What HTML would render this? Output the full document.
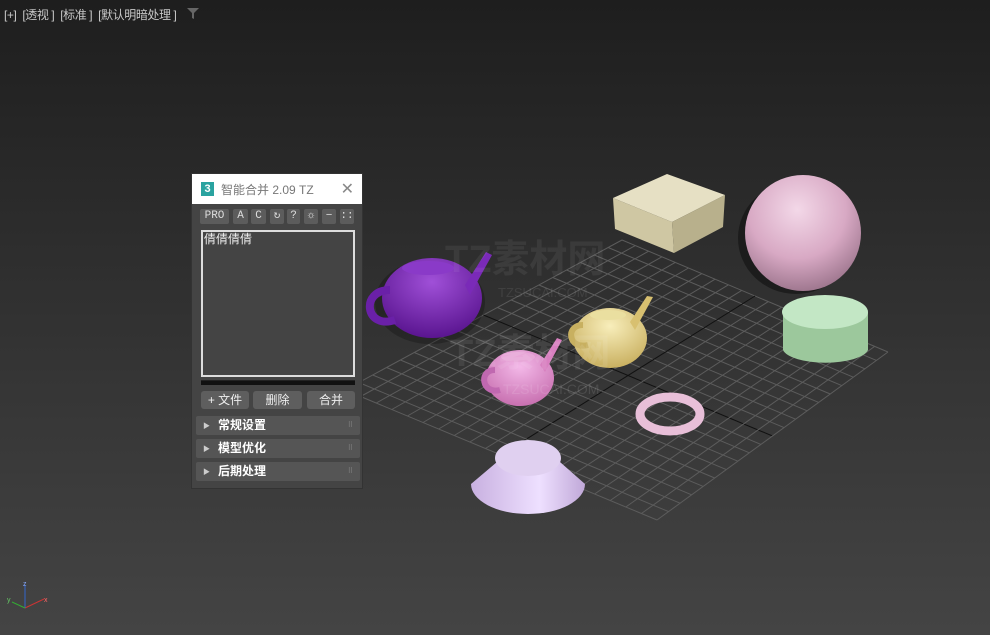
<!DOCTYPE html>
<html><head><meta charset="utf-8"><style>
body{margin:0;width:990px;height:635px;overflow:hidden;background:linear-gradient(#1e1e1e,#2c2c2c 35%,#444 100%);font-family:"Liberation Sans","Noto Sans CJK SC",sans-serif;position:relative}
.top{position:absolute;left:4px;top:6px;font-size:12px;color:#c8c8c8;white-space:pre;letter-spacing:-0.4px}
.panel{position:absolute;left:191px;top:173px;width:172px;height:316px;background:#444;border:1px solid #333;box-sizing:border-box}
.tt{height:30px;background:#fff;color:#777;font-size:12px;display:flex;align-items:center;position:relative}
.ic{width:13px;height:14px;background:#2aa3a0;color:#fff;font-size:11px;font-weight:bold;text-align:center;line-height:14px;margin:0 7px 0 9px}
.x{position:absolute;right:8px;top:5px;font-size:16px;color:#888}
.tb{position:absolute;top:35px;height:15px;background:#5c5c5c;border-radius:2px;color:#ddd;font-size:11px;text-align:center;line-height:15px;font-family:"Liberation Mono",monospace}
.list{position:absolute;left:9px;top:56px;width:154px;height:147px;border:2px solid #ddd;box-sizing:border-box;background:#444;color:#eee;font-size:12px;padding:0 1px;line-height:14px}
.bar{position:absolute;left:9px;top:206px;width:154px;height:4px;background:#111;border-top:1px solid #222}
.btn{position:absolute;top:217px;height:18px;background:#5e5e5e;border-radius:3px;color:#eee;font-size:12px;text-align:center;line-height:18px}
.sec{position:absolute;left:4px;width:164px;height:19px;background:#555;border-radius:2px;color:#fff;font-weight:bold;font-size:12px;line-height:19px}
.sec i{font-style:normal;font-size:7px;color:#ccc;margin:0 8px 0 7px;vertical-align:1px}
.sec b{position:absolute;right:7px;color:#888;font-size:7px;font-weight:normal}
</style></head><body>
<div class="top">[+]  [透视 ]  [标准 ]  [默认明暗处理 ]</div>
<svg style="position:absolute;left:187px;top:8px" width="12" height="11"><path d="M0 0H12L7 5V11L5 10V5Z" fill="#666"/></svg>
<svg width="990" height="635" style="position:absolute;left:0;top:0">
<defs>
<radialGradient id="sp" cx=".45" cy=".3" r=".7"><stop offset="0" stop-color="#f3d8e8"/><stop offset=".6" stop-color="#d8a9c4"/><stop offset="1" stop-color="#a07890"/></radialGradient>
<radialGradient id="pu" cx=".5" cy=".3" r=".7"><stop offset="0" stop-color="#a050d8"/><stop offset="1" stop-color="#5a1590"/></radialGradient>
<radialGradient id="ye" cx=".5" cy=".3" r=".7"><stop offset="0" stop-color="#f8eebb"/><stop offset="1" stop-color="#c9b060"/></radialGradient>
<radialGradient id="pk" cx=".5" cy=".3" r=".7"><stop offset="0" stop-color="#f3b8e8"/><stop offset="1" stop-color="#c870b0"/></radialGradient>
<linearGradient id="cn" x1="0" x2="1"><stop offset="0" stop-color="#c8b0e0"/><stop offset=".6" stop-color="#eee0ff"/><stop offset="1" stop-color="#c0a8d8"/></linearGradient>
</defs>
<g stroke="#5c5c5c" stroke-width="1" fill="none" id="grid"></g>
<polygon points="613,198 667,174 725,195 672,222" fill="#e6e0c4"/>
<polygon points="613,198 672,222 674,253 615,229" fill="#cfc7a3"/>
<polygon points="672,222 725,195 723,227 674,253" fill="#b8b08c"/>
<ellipse cx="796" cy="238" rx="58" ry="56" fill="#111" opacity=".6"/>
<circle cx="803" cy="233" r="58" fill="url(#sp)"/>
<path d="M783 312V350A43 15 0 0 0 868 350V312Z" fill="#9cc89c"/>
<ellipse cx="825" cy="312" rx="43" ry="17" fill="#c3e7c5"/>
<ellipse cx="430" cy="302" rx="55" ry="42" fill="#111" opacity=".35"/>
<ellipse cx="432" cy="298" rx="50" ry="40" fill="url(#pu)"/>
<path d="M470 295L492 255L486 252L465 285Z" fill="#7a2ab8"/>
<path d="M390 290C360 290 365 330 395 320" stroke="#6a20a8" stroke-width="8" fill="none"/>
<ellipse cx="428" cy="268" rx="26" ry="7" fill="#8a3ac8"/>
<ellipse cx="610" cy="338" rx="37" ry="30" fill="url(#ye)"/>
<path d="M635 330L653 297L647 296L630 322Z" fill="#d8c070"/>
<path d="M583 325C565 325 568 350 588 345" stroke="#c8b060" stroke-width="6" fill="none"/>
<ellipse cx="608" cy="315" rx="18" ry="5" fill="#eadfa0"/>
<ellipse cx="520" cy="378" rx="34" ry="28" fill="url(#pk)"/>
<path d="M545 372L562 340L557 338L540 365Z" fill="#d880c0"/>
<path d="M495 370C478 370 482 395 500 390" stroke="#c068b0" stroke-width="6" fill="none"/>
<ellipse cx="518" cy="357" rx="17" ry="5" fill="#e8a8d8"/>
<ellipse cx="670" cy="414" rx="30" ry="17" fill="none" stroke="#e8bfd8" stroke-width="9"/>
<path d="M497 462L471 484A57 30 0 0 0 585 484L560 462Z" fill="url(#cn)"/>
<ellipse cx="528" cy="458" rx="33" ry="18" fill="#e0d0f0"/>
<text x="445" y="272" font-size="38" font-weight="bold" fill="#fff" opacity=".06" font-family="Liberation Sans,Noto Sans CJK SC,sans-serif">TZ素材网</text>
<text x="450" y="366" font-size="38" font-weight="bold" fill="#fff" opacity=".08" font-family="Liberation Sans,Noto Sans CJK SC,sans-serif">TZ素材网</text>
<text x="498" y="297" font-size="13" fill="#fff" opacity=".08">TZSUCAI.COM</text>
<text x="503" y="394" font-size="14" fill="#fff" opacity=".1">TZSUCAI.COM</text>
<path d="M25 608L44 599" stroke="#c33"/>
<path d="M25 608V585" stroke="#36c"/><path d="M25 608L12 602" stroke="#3a3"/>
<text x="23" y="586" font-size="7" fill="#8af">z</text><text x="44" y="602" font-size="7" fill="#f66">x</text><text x="7" y="602" font-size="7" fill="#6c6">y</text>
</svg>
<script>
var g=document.getElementById('grid');
var T=[622,240],R=[888,352],B=[657,520],L=[345,390],s='';
function lp(a,b,t){return[a[0]+(b[0]-a[0])*t,a[1]+(b[1]-a[1])*t]}
for(var i=0;i<=20;i++){var t=i/20;var a=lp(T,R,t),b=lp(L,B,t),c=lp(T,L,t),d=lp(R,B,t);
var w=(i==10)?' stroke="#111"':'';
s+='<line x1="'+a[0]+'" y1="'+a[1]+'" x2="'+b[0]+'" y2="'+b[1]+'"'+w+'/>';
s+='<line x1="'+c[0]+'" y1="'+c[1]+'" x2="'+d[0]+'" y2="'+d[1]+'"'+w+'/>';}
g.innerHTML=s;
</script>
<div class="panel">
<div class="tt"><span class="ic">3</span>智能合并 2.09 TZ<span class="x">✕</span></div>
<div class="tb" style="left:8px;width:29px">PRO</div>
<div class="tb" style="left:41px;width:15px">A</div>
<div class="tb" style="left:59px;width:15px">C</div>
<div class="tb" style="left:78px;width:14px">↻</div>
<div class="tb" style="left:95px;width:13px">?</div>
<div class="tb" style="left:112px;width:14px">☼</div>
<div class="tb" style="left:130px;width:14px">−</div>
<div class="tb" style="left:148px;width:14px">::</div>
<div class="list">倩倩倩倩</div>
<div class="bar"></div>
<div class="btn" style="left:9px;width:48px">+ 文件</div>
<div class="btn" style="left:61px;width:49px">删除</div>
<div class="btn" style="left:115px;width:48px">合并</div>
<div class="sec" style="top:242px"><i>▶</i>常规设置<b>⠿</b></div>
<div class="sec" style="top:265px"><i>▶</i>模型优化<b>⠿</b></div>
<div class="sec" style="top:288px"><i>▶</i>后期处理<b>⠿</b></div>
</div>
</body></html>
